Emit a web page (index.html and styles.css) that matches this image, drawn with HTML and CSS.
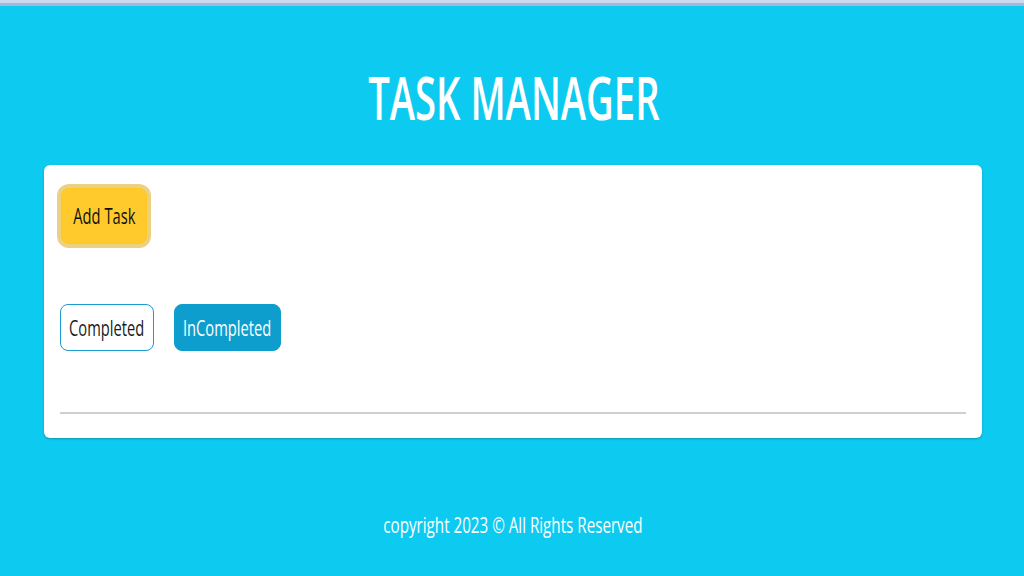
FILE: index.html
```html
<!DOCTYPE html>
<html lang="en">
<head>
<meta charset="utf-8">
<title>Task Manager</title>
<link rel="stylesheet" href="styles.css">
</head>
<body>
<div class="topbar"><div class="topbar-light"></div><div class="topbar-dark"></div></div>
<main class="page">
  <h1 class="title"><span class="sq sq-title">TASK MANAGER</span></h1>
  <section class="card">
    <button class="btn btn-add"><span class="sq">Add Task</span></button>
    <div class="filters">
      <button class="btn btn-outline"><span class="sq">Completed</span></button>
      <button class="btn btn-fill"><span class="sq">InCompleted</span></button>
    </div>
    <hr class="divider">
  </section>
  <footer class="footer"><span class="sq sq-footer">copyright 2023 © All Rights Reserved</span></footer>
</main>
</body>
</html>
```

FILE: styles.css
```css
* { box-sizing: border-box; }
html, body { margin: 0; padding: 0; }
body {
  background: #0dcaf0;
  font-family: "Open Sans", "Noto Sans", sans-serif;
  width: 1024px;
  height: 576px;
  overflow: hidden;
}
.topbar-light { height: 3px; background: #cdd8f1; }
.topbar-dark { height: 3px; background: #a8b5db; }
.page { display: flex; flex-direction: column; }
.sq { display: inline-block; transform: scaleX(0.7); white-space: nowrap; }
.sq-title { transform: scaleX(0.648); }
.sq-footer { transform: scaleX(0.69); }
.title {
  margin: 56px 0 32px;
  padding-left: 3px;
  text-align: center;
  color: #fff;
  font-size: 59px;
  font-weight: 600;
  line-height: 71px;
}
.card {
  margin: 0 42px 0 44px;
  background: #fff;
  border-radius: 6px;
  box-shadow: 0 1px 2px rgba(0,0,0,.25);
  padding: 23px 16px 24px 16px;
  display: flex;
  flex-direction: column;
  align-items: flex-start;
}
.btn {
  display: flex;
  align-items: center;
  justify-content: center;
  font-family: inherit;
  font-size: 21px;
  border-radius: 8px;
  padding: 0;
  overflow: visible;
}
.btn-add {
  margin-left: 1px;
  width: 86px;
  height: 56px;
  background: #ffca2c;
  border: 1px solid #ffc720;
  color: #111;
  box-shadow: 0 0 0 4px rgba(217,164,6,.5);
}
.filters {
  margin-top: 60px;
  display: flex;
  gap: 20px;
}
.btn-outline {
  width: 94px;
  height: 47px;
  background: #fff;
  border: 1px solid #1a9ccc;
  color: #1b1b1b;
}
.btn-fill {
  width: 107px;
  height: 47px;
  background: #0e9ecd;
  border: 1px solid #0e9ecd;
  color: #fff;
}
.divider {
  align-self: stretch;
  margin: 61px 0 0;
  border: 0;
  height: 2px;
  background: #cfcfcf;
}
.footer {
  margin-top: 71px;
  padding-left: 2px;
  text-align: center;
  color: #fff;
  font-size: 22px;
  line-height: 30px;
}
```
